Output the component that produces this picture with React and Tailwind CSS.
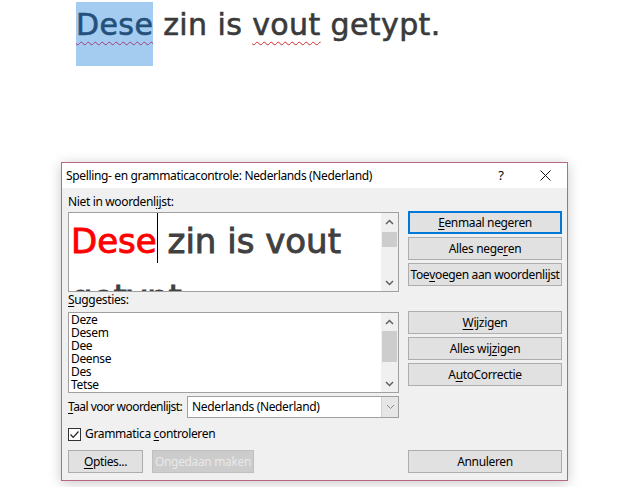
import React from "react";

function Chevron({ dir = "up", color = "#606060", w = 9, h = 6, sw = 1.5 }) {
  const pts = dir === "up" ? "1,5 4.5,1.5 8,5" : "1,1 4.5,4.5 8,1";
  return (
    <svg width={w} height={h} viewBox="0 0 9 6">
      <polyline points={pts} fill="none" stroke={color} strokeWidth={sw} />
    </svg>
  );
}

function Btn({ children, primary = false, disabled = false, className = "" }) {
  let cls = "h-[23px] flex items-center justify-center whitespace-nowrap ";
  if (primary) cls += "border-2 border-[#0078d7] bg-[#e1e1e1] text-black ";
  else if (disabled) cls += "border border-[#bfbfbf] bg-[#cccccc] text-[#e8e8e8] ";
  else cls += "border border-[#adadad] bg-[#e1e1e1] text-black ";
  return <div className={cls + className}>{children}</div>;
}

function U({ children }) {
  return <span className="underline underline-offset-[2px] decoration-1">{children}</span>;
}

function ScrollBar({ thumbTop, thumbH }) {
  return (
    <div className="w-[17px] bg-[#f0f0f0] flex flex-col">
      <div className="h-[17px] flex items-center justify-center">
        <Chevron dir="up" />
      </div>
      <div style={{ marginTop: thumbTop, height: thumbH }} className="bg-[#cdcdcd] mx-[1px]" />
      <div className="flex-1" />
      <div className="h-[17px] flex items-center justify-center">
        <Chevron dir="down" />
      </div>
    </div>
  );
}

export default function App() {
  const suggestions = ["Deze", "Desem", "Dee", "Deense", "Des", "Tetse"];
  return (
    <div className="w-[626px] h-[487px] bg-white overflow-hidden">
      {/* document text */}
      <div className="h-[162px] pt-[2px] pl-[76px] whitespace-nowrap font-['DejaVu_Sans',sans-serif] text-[30px] leading-[45px] tracking-[0.4px] text-[#3a3a3a] [-webkit-text-stroke-width:0.6px]">
        <span className="inline-block bg-[#a4cbf0] text-[#23507a] pb-[19px] align-baseline">
          <span className="underline decoration-wavy decoration-[#a0407a] decoration-1 underline-offset-[6px]">Dese</span>
        </span>
        <span> zin is </span>
        <span className="underline decoration-wavy decoration-[#d02828] decoration-1 underline-offset-[6px]">vout</span>
        <span> getypt.</span>
      </div>

      {/* dialog */}
      <div className="ml-[61px] w-[507px] h-[319px] border border-[#b9687f] bg-[#f0f0f0] flex flex-col shadow-[0_2px_12px_rgba(0,0,0,0.22)] font-['Noto_Sans',sans-serif] text-[12px] tracking-[-0.35px] text-black">
        {/* title bar */}
        <div className="h-[25px] bg-white flex items-center pl-[4px]">
          <div className="flex-1 whitespace-nowrap">Spelling- en grammaticacontrole: Nederlands (Nederland)</div>
          <div className="w-[44px] h-full flex items-center justify-center text-[13px]">?</div>
          <div className="w-[44px] h-full flex items-center justify-center">
            <svg width="11" height="11" viewBox="0 0 11 11">
              <line x1="0.5" y1="0.5" x2="10.5" y2="10.5" stroke="#111" strokeWidth="1" />
              <line x1="10.5" y1="0.5" x2="0.5" y2="10.5" stroke="#111" strokeWidth="1" />
            </svg>
          </div>
        </div>

        {/* body */}
        <div className="flex-1 pl-[6px] pr-[5px] pt-[6px] flex flex-col">
          <div className="flex gap-[9px]">
            {/* left column */}
            <div className="w-[331px] flex flex-col">
              <div className="h-[16px] leading-[16px] whitespace-nowrap">
                Niet in woordenl<U>ij</U>st:
              </div>
              <div className="mt-[2px] h-[80px] border border-[#a0a0a0] bg-white flex overflow-hidden">
                <div className="flex-1 pl-[2px] pt-0 overflow-hidden font-['DejaVu_Sans',sans-serif] text-[34px] leading-[56px] tracking-normal text-[#404040] [-webkit-text-stroke-width:0.9px]">
                  <span className="relative text-[#ff0000]">
                    Dese
                    <span className="absolute right-[-1px] top-[-8px] w-px h-[50px] bg-black" />
                  </span>{" "}
                  zin is vout getypt.
                </div>
                <ScrollBar thumbTop={2} thumbH={15} />
              </div>

              <div className="h-[16px] leading-[16px]">
                <U>S</U>uggesties:
              </div>
              <div className="mt-[4px] h-[81px] border border-[#a0a0a0] bg-white flex overflow-hidden">
                <div className="flex-1 pl-[2px] flex flex-col">
                  {suggestions.map((s) => (
                    <div key={s} className="h-[13px] leading-[13px]">{s}</div>
                  ))}
                </div>
                <ScrollBar thumbTop={1} thumbH={31} />
              </div>

              <div className="mt-[3px] flex items-center">
                <div className="w-[119px] whitespace-nowrap tracking-[-0.55px]">
                  <U>T</U>aal voor woordenlijst:
                </div>
                <div className="w-[212px] h-[22px] border border-[#a0a0a0] bg-white flex">
                  <div className="flex-1 pl-[4px] leading-[20px] whitespace-nowrap">Nederlands (Nederland)</div>
                  <div className="w-[17px] bg-[#e6e6e6] border-l border-[#d4d4d4] flex items-center justify-center">
                    <Chevron dir="down" color="#888888" sw={1} />
                  </div>
                </div>
              </div>
            </div>

            {/* right column */}
            <div className="w-[154px] flex flex-col pt-[17px] gap-[3px]">
              <Btn primary><U>E</U>enmaal negeren</Btn>
              <Btn>Alles nege<U>r</U>en</Btn>
              <Btn>Toe<U>v</U>oegen aan woordenlijst</Btn>
              <Btn className="mt-[22px]"><U>W</U>ijzigen</Btn>
              <Btn>Alles wij<U>z</U>igen</Btn>
              <Btn>A<U>u</U>toCorrectie</Btn>
            </div>
          </div>

          {/* checkbox */}
          <div className="mt-[8px] h-[16px] flex items-center gap-[4px]">
            <div className="w-[13px] h-[13px] border border-[#333333] bg-white flex items-center justify-center">
              <svg width="11" height="11" viewBox="0 0 11 11">
                <polyline points="1.5,5.5 4.2,8.3 9.5,2.5" fill="none" stroke="#222" strokeWidth="1.2" />
              </svg>
            </div>
            <div className="whitespace-nowrap">
              Grammatica <U>c</U>ontroleren
            </div>
          </div>

          {/* bottom buttons */}
          <div className="mt-[8px] flex">
            <Btn className="w-[75px]"><U>O</U>pties...</Btn>
            <Btn disabled className="w-[102px] ml-[9px]">Ongedaan maken</Btn>
            <Btn className="w-[154px] ml-auto">Annuleren</Btn>
          </div>
        </div>
      </div>
    </div>
  );
}
